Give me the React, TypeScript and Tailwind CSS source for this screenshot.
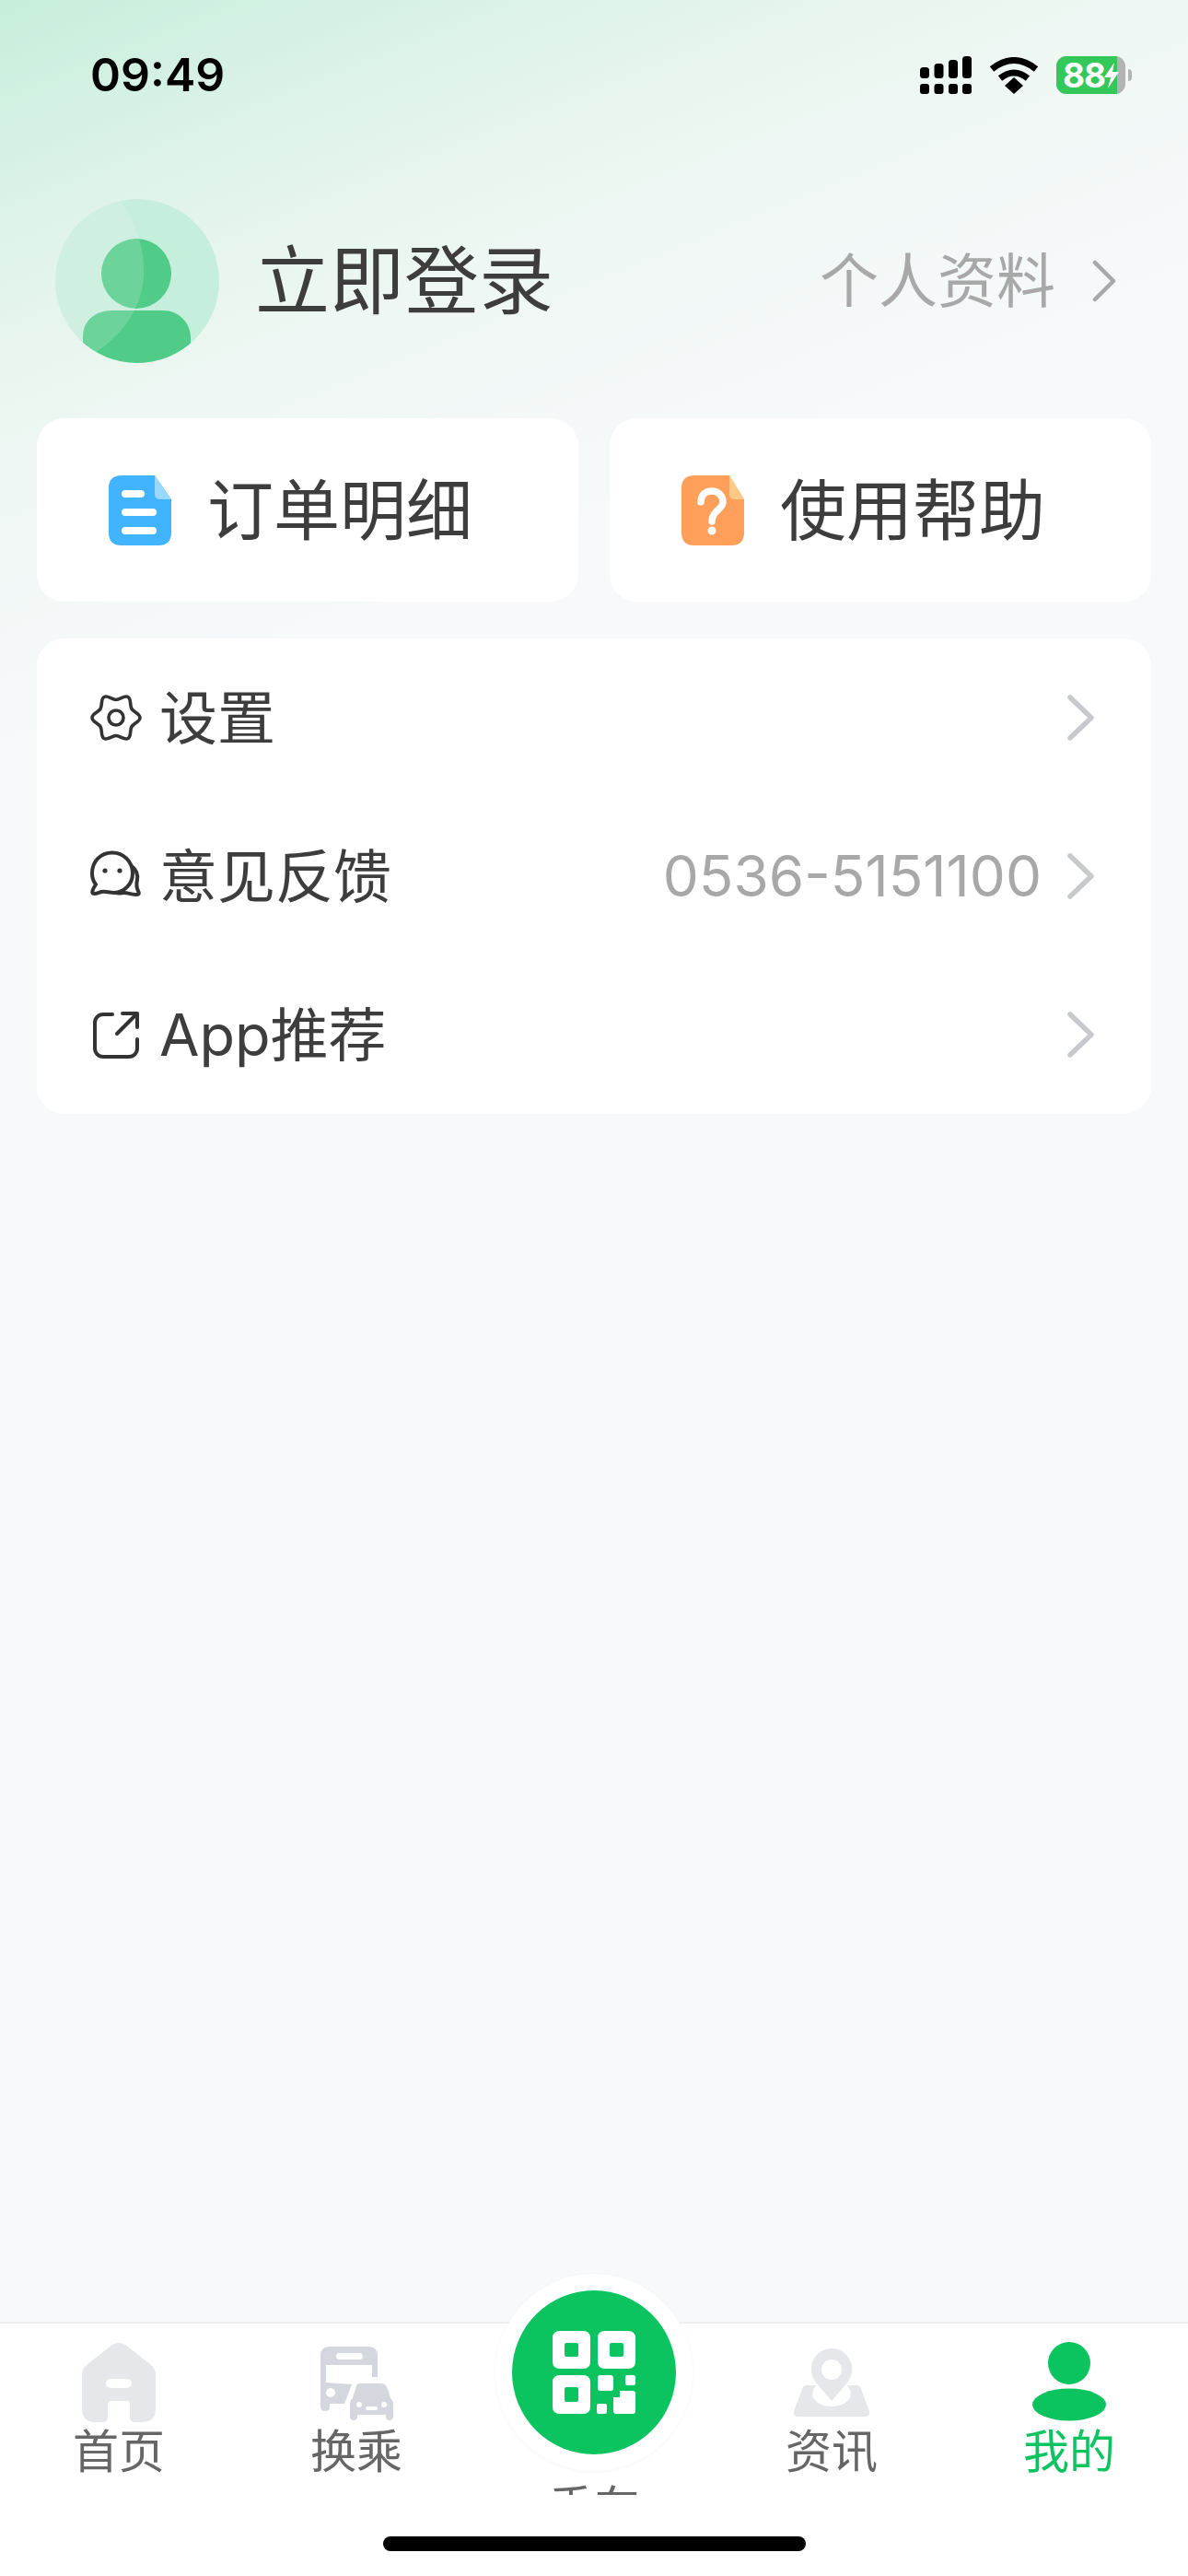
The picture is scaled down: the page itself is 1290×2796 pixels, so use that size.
const CJK = "font-['Inter','Noto_Sans_CJK_SC',sans-serif]";

function SignalIcon() {
  return (
    <svg width="56" height="41" viewBox="0 0 56 41" fill="#000">
      <rect x="0" y="12" width="10" height="12" rx="3.5" />
      <rect x="15.5" y="8" width="10" height="16" rx="3.5" />
      <rect x="31" y="4" width="10" height="20" rx="3.5" />
      <rect x="46" y="0" width="10" height="24" rx="3.5" />
      <rect x="0" y="30" width="10" height="11" rx="3" />
      <rect x="15.5" y="30" width="10" height="11" rx="3" />
      <rect x="31" y="30" width="10" height="11" rx="3" />
      <rect x="46" y="30" width="10" height="11" rx="3" />
    </svg>
  );
}

function WifiIcon() {
  return (
    <svg width="54" height="40" viewBox="0 0 54 40" fill="none" stroke="#000" strokeWidth="7">
      <path d="M3 13 Q27 -6 51 13" />
      <path d="M12 23 Q27 11 42 23" />
      <path d="M17 31 L27 22 L37 31 L27 40 Z" fill="#000" stroke="none" />
    </svg>
  );
}

function Battery() {
  return (
    <div className="flex items-center">
      <div className="relative flex h-[41px] w-[75px] rounded-[11px] bg-[#b3b3b3]">
        <div className="flex h-full w-[66px] items-center rounded-l-[11px] bg-[#34c759] pl-[7px] font-['Inter',sans-serif] text-[37px] font-bold leading-none tracking-[-1px] text-white">
          88
        </div>
        <svg className="absolute left-[52px] top-[7px]" width="16" height="28" viewBox="0 0 16 28" fill="#fff">
          <path d="M11 0 L0 16 H7 L4 28 L16 10 H9 Z" />
        </svg>
      </div>
      <div className="ml-[3px] h-[13px] w-[4px] rounded-r-full bg-[#b3b3b3]" />
    </div>
  );
}

function Avatar() {
  return (
    <svg width="180" height="180" viewBox="0 0 180 180">
      <defs>
        <clipPath id="avatarClip">
          <circle cx="90" cy="90" r="89" />
        </clipPath>
      </defs>
      <g clipPath="url(#avatarClip)">
        <rect width="180" height="180" fill="#c6eedc" />
        <circle cx="89" cy="82" r="38" fill="#50cb88" />
        <path d="M31 180 V150 C31 133 45 122 62 122 H118 C135 122 148 135 148 152 V180 Z" fill="#50cb88" />
        <path d="M71 2 C104 50 116 118 46 167 L0 180 L0 0 Z" fill="#fff" opacity="0.16" />
      </g>
    </svg>
  );
}

function DocIcon() {
  return (
    <svg width="68" height="76" viewBox="0 0 68 76">
      <path d="M14 0 H50 L68 26 V62 Q68 76 54 76 H14 Q0 76 0 62 V14 Q0 0 14 0 Z" fill="#42b4ff" />
      <path d="M50 0 L68 26 H56 Q50 26 50 20 Z" fill="#99d8ff" />
      <rect x="14" y="16" width="25" height="8" rx="4" fill="#fff" />
      <rect x="14" y="36" width="38" height="8" rx="4" fill="#fff" />
      <rect x="14" y="56" width="38" height="8" rx="4" fill="#fff" />
    </svg>
  );
}

function HelpIcon() {
  return (
    <svg width="68" height="76" viewBox="0 0 68 76">
      <path d="M14 0 H52 L68 26 V62 Q68 76 54 76 H14 Q0 76 0 62 V14 Q0 0 14 0 Z" fill="#ff9f59" />
      <path d="M52 0 L68 26 H58 Q52 26 52 20 Z" fill="#ffc988" />
      <path d="M21 29 C21 21 26 17 33 17 C40 17 45 22 45 29 C45 37 33 38 33 50" fill="none" stroke="#fff" strokeWidth="7.5" strokeLinecap="round" />
      <circle cx="33" cy="60" r="4.5" fill="#fff" />
    </svg>
  );
}

function GearIcon() {
  return (
    <svg width="56" height="56" viewBox="-1 -1 56 56" fill="none" stroke="#333" strokeWidth="3.6" strokeLinejoin="round">
      <path d="M53 27 C53 31.5 46.14 32.85 43.89 36.75 C41.64 40.65 43.9 47.27 40 49.52 C36.1 51.77 31.5 46.5 27 46.5 C22.5 46.5 17.9 51.77 14 49.52 C10.1 47.27 12.36 40.65 10.11 36.75 C7.86 32.85 1 31.5 1 27 C1 22.5 7.86 21.15 10.11 17.25 C12.36 13.35 10.1 6.73 14 4.48 C17.9 2.23 22.5 7.5 27 7.5 C31.5 7.5 36.1 2.23 40 4.48 C43.9 6.73 41.64 13.35 43.89 17.25 C46.14 21.15 53 22.5 53 27 Z" />
      <circle cx="27" cy="27" r="8" />
    </svg>
  );
}

function ChatIcon() {
  return (
    <svg width="56" height="56" viewBox="0 0 56 56" fill="none" stroke="#333" strokeWidth="4" strokeLinejoin="round" strokeLinecap="round">
      <path d="M6 37 C3 33 2 29 2 25 C2 12 11 2.5 24 2.5 C36 2.5 46 12 46 25 C46 37 37 45 26 46 C20 46 17 44 12 45 C9 46 7 47 4 47 C1 47 2 43 6 37 Z" />
      <path d="M45 17 C50 21 52 26 51 32 C50 36 50 40 52 44 C54 48 52 48 49 48 C44 48 41 46 37 46 C34 46 32 47 27 46" />
      <circle cx="16" cy="22" r="2.6" fill="#333" stroke="none" />
      <circle cx="32" cy="22" r="2.6" fill="#333" stroke="none" />
    </svg>
  );
}

function ShareIcon() {
  return (
    <svg width="52" height="52" viewBox="0 0 52 52" fill="none" stroke="#333" strokeWidth="4" strokeLinecap="round" strokeLinejoin="round">
      <path d="M22 4 H12 A9 9 0 0 0 3 13 V41 A9 9 0 0 0 12 50 H40 A9 9 0 0 0 49 41 V31" />
      <path d="M27 25 L48 4" />
      <path d="M33 3 H49 V18" />
    </svg>
  );
}

function ListChevron() {
  return (
    <svg width="30" height="50" viewBox="0 0 30 50" fill="none" stroke="#c8c9cc" strokeWidth="5.5" strokeLinecap="round" strokeLinejoin="round">
      <path d="M4 3 L27 25 L4 47" />
    </svg>
  );
}

function HeaderChevron() {
  return (
    <svg width="26" height="46" viewBox="0 0 26 46" fill="none" stroke="#a8a8a8" strokeWidth="4.5" strokeLinecap="round" strokeLinejoin="round">
      <path d="M3 3 L23 23 L3 43" />
    </svg>
  );
}

function HomeTabIcon() {
  return (
    <svg width="80" height="87" viewBox="0 0 80 87">
      <path d="M33 3 Q40 -1 47 3 L74 24 Q80 29 80 36 V72 Q80 87 65 87 H58 Q52 87 52 81 V68 Q52 64 48 64 H32 Q28 64 28 68 V81 Q28 87 22 87 H15 Q0 87 0 72 V36 Q0 29 6 24 Z" fill="#e6e7eb" />
      <rect x="26" y="40" width="28" height="10" rx="5" fill="#fff" />
    </svg>
  );
}

function TransferTabIcon() {
  return (
    <svg className="mb-[2px]" width="79" height="80" viewBox="0 0 79 80">
      <path d="M10 0 H52 Q62 0 62 10 V33 H56 V20 H6 V39 L34 41 L26 62 H10 V66 Q10 70 5 70 Q0 70 0 65 V10 Q0 0 10 0 Z" fill="#d5d7de" />
      <rect x="17" y="7" width="29" height="7" rx="3.5" fill="#fff" />
      <circle cx="11" cy="50" r="5" fill="#fff" />
      <path d="M42 40 H66 Q71 40 73 46 L76 56 Q79 58 79 64 V76 Q79 80 75 80 Q71 80 71 76 V74 H40 V76 Q40 80 36 80 Q32 80 32 76 V64 Q32 58 35 56 L38 46 Q39 40 42 40 Z" fill="#d5d7de" />
      <circle cx="42" cy="63" r="3" fill="#fff" />
      <circle cx="69" cy="63" r="3" fill="#fff" />
      <rect x="49" y="65" width="13" height="4" rx="2" fill="#fff" />
    </svg>
  );
}

function NewsTabIcon() {
  return (
    <svg className="mb-[6px]" width="82" height="74" viewBox="0 0 82 74">
      <path d="M14 40 H68 Q72 40 73 44 L82 68 Q83 74 77 74 H5 Q-1 74 0 68 L9 44 Q10 40 14 40 Z" fill="#e6e7eb" />
      <ellipse cx="41" cy="49" rx="21" ry="14" fill="#fff" />
      <path d="M41 57 L24 37 C20 32 19 27 19 22 C19 10 29 0 41 0 C53 0 63 10 63 22 C63 27 62 32 58 37 Z" fill="#e6e7eb" />
      <circle cx="41" cy="23" r="11" fill="#fff" />
    </svg>
  );
}

function MineTabIcon() {
  return (
    <svg className="mb-[1px]" width="80" height="86" viewBox="0 0 80 86" fill="#0bc35f">
      <circle cx="40" cy="23" r="23" />
      <ellipse cx="40" cy="68" rx="40" ry="17.5" />
    </svg>
  );
}

function QrIcon() {
  return (
    <svg width="90" height="90" viewBox="0 0 90 90" fill="#fff">
      <path fillRule="evenodd" d="M8 0 H33 Q41 0 41 8 V33 Q41 41 33 41 H8 Q0 41 0 33 V8 Q0 0 8 0 Z M15 13 Q13 13 13 15 V26 Q13 28 15 28 H26 Q28 28 28 26 V15 Q28 13 26 13 Z" />
      <path fillRule="evenodd" d="M57 0 H82 Q90 0 90 8 V33 Q90 41 82 41 H57 Q49 41 49 33 V8 Q49 0 57 0 Z M64 13 Q62 13 62 15 V26 Q62 28 64 28 H75 Q77 28 77 26 V15 Q77 13 75 13 Z" />
      <path fillRule="evenodd" d="M8 48 H33 Q41 48 41 56 V82 Q41 90 33 90 H8 Q0 90 0 82 V56 Q0 48 8 48 Z M15 61 Q13 61 13 63 V75 Q13 77 15 77 H26 Q28 77 28 75 V63 Q28 61 26 61 Z" />
      <rect x="49" y="48" width="17" height="17" rx="3" />
      <rect x="79" y="48" width="11" height="11" rx="2" />
      <rect x="48" y="79" width="11" height="11" rx="2" />
      <path d="M73 65 H87 Q90 65 90 68 V87 Q90 90 87 90 H69 Q66 90 66 87 V72 H73 Z" />
    </svg>
  );
}

function ActionCard({ icon, label }: { icon: React.ReactNode; label: string }) {
  return (
    <div className="flex h-[199px] flex-1 items-center gap-[39px] rounded-[30px] bg-white pl-[78px]">
      {icon}
      <span className="text-[72px] leading-none text-[#3d3d3d]">{label}</span>
    </div>
  );
}

function ListRow({ icon, label, value }: { icon: React.ReactNode; label: string; value?: string }) {
  return (
    <div className="flex h-[172px] items-center pl-[58px] pr-[62px]">
      <div className="flex w-[56px] justify-center">{icon}</div>
      <span className="ml-[19px] flex-1 text-[63px] leading-none text-[#3d3d3d]">{label}</span>
      {value && <span className="mr-[27px] text-[62px] leading-none text-[#a8a8a8]">{value}</span>}
      <ListChevron />
    </div>
  );
}

function TabItem({ icon, label, active }: { icon: React.ReactNode; label: string; active?: boolean }) {
  return (
    <div className="flex flex-1 flex-col items-center">
      <div className="flex h-[88px] items-end">{icon}</div>
      <span className={`mt-[4px] text-[50px] leading-[56px] ${active ? 'text-[#0bc35f]' : 'text-[#666666]'}`}>{label}</span>
    </div>
  );
}

export default function App() {
  return (
    <div className={`flex h-[2796px] w-[1290px] flex-col overflow-hidden bg-[linear-gradient(158deg,#c6eedb_0%,#e2f4ea_9%,#eef7f3_15%,#f7f9fb_25%,#f7f9fb_100%)] ${CJK}`}>
      {/* status bar */}
      <div className="flex h-[215px] items-start justify-between pl-[98px] pr-[61px] pt-[61px]">
        <span className="font-['Inter',sans-serif] text-[50px] font-semibold leading-[41px] text-black">09:49</span>
        <div className="flex items-center">
          <SignalIcon />
          <div className="ml-[19px] mr-[19px]">
            <WifiIcon />
          </div>
          <Battery />
        </div>
      </div>

      {/* profile header */}
      <div className="flex h-[180px] items-center pl-[59px] pr-[78px]">
        <Avatar />
        <span className="ml-[38px] flex-1 text-[81px] leading-none text-[#3d3d3d]">立即登录</span>
        <span className="text-[64px] leading-none text-[#a8a8a8]">个人资料</span>
        <div className="ml-[40px]">
          <HeaderChevron />
        </div>
      </div>

      {/* quick actions */}
      <div className="mt-[59px] flex gap-[34px] px-[40px]">
        <ActionCard icon={<DocIcon />} label="订单明细" />
        <ActionCard icon={<HelpIcon />} label="使用帮助" />
      </div>

      {/* menu list */}
      <div className="mx-[40px] mt-[40px] rounded-[30px] bg-white">
        <ListRow icon={<GearIcon />} label="设置" />
        <ListRow icon={<ChatIcon />} label="意见反馈" value="0536-5151100" />
        <ListRow icon={<ShareIcon />} label="App推荐" />
      </div>

      <div className="flex-1" />

      {/* tab bar */}
      <div className="relative h-[276px] border-t-2 border-[#eeeeee] bg-white pt-[19px]">
        <div className="flex">
          <TabItem icon={<HomeTabIcon />} label="首页" />
          <TabItem icon={<TransferTabIcon />} label="换乘" />
          <div className="flex flex-1 justify-center">
            <div className="mt-[153px] h-[14px] overflow-hidden">
              <span className="block text-[50px] leading-[56px] text-[#666666]">乘车</span>
            </div>
          </div>
          <TabItem icon={<NewsTabIcon />} label="资讯" />
          <TabItem icon={<MineTabIcon />} label="我的" active />
        </div>
        <div className="absolute left-[538px] top-[-54px] flex h-[214px] w-[214px] items-center justify-center rounded-full bg-white shadow-[0_1px_4px_rgba(0,0,0,0.04)]">
          <div className="flex h-[178px] w-[178px] items-center justify-center rounded-full bg-[#0bc35f]">
            <QrIcon />
          </div>
        </div>
        <div className="absolute bottom-[27px] left-[416px] h-[16px] w-[459px] rounded-full bg-black" />
      </div>
    </div>
  );
}
